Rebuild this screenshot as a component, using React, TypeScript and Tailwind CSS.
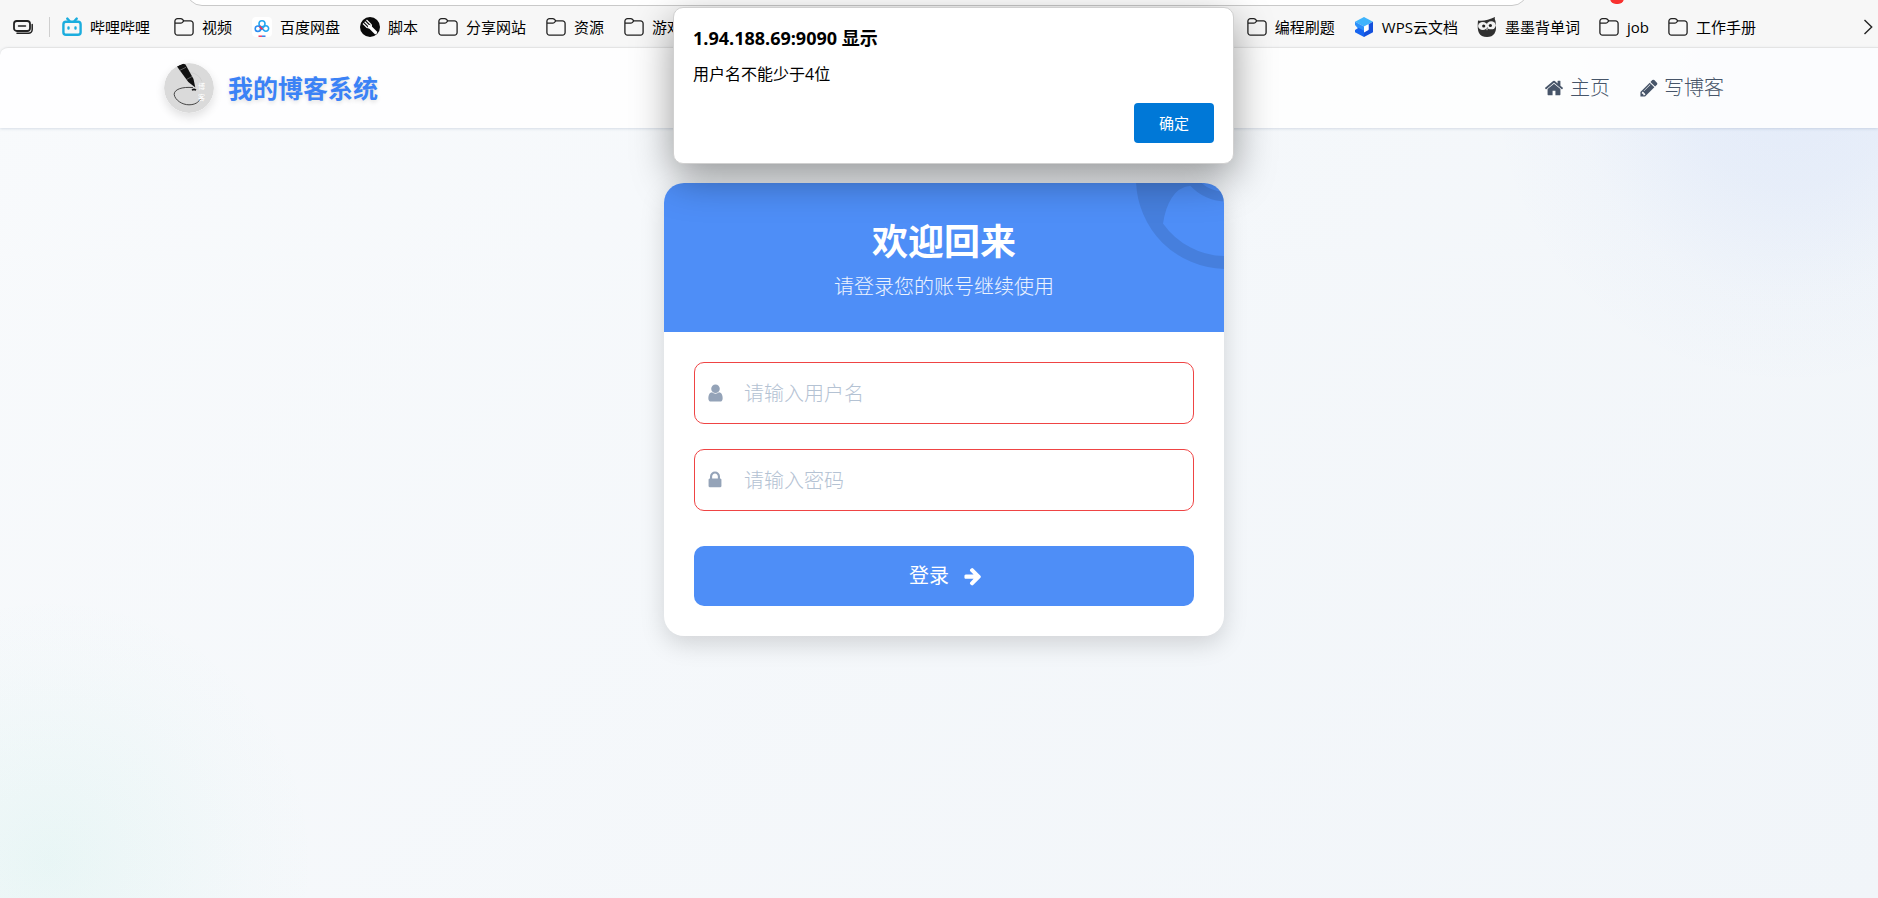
import React from 'react';

const FolderIcon = () => (
  <svg className="h-5 w-5 shrink-0" viewBox="0 0 20 20" fill="none" stroke="#222" strokeWidth="1.3">
    <path d="M.9 5V4.2A2.6 2.6 0 0 1 3.5 1.6h3.3c.6 0 1.1.2 1.5.6l1.6 1.7h6.6A2.6 2.6 0 0 1 19.1 6.5v9a2.6 2.6 0 0 1-2.6 2.6h-13A2.6 2.6 0 0 1 .9 15.5zM.9 6.2h5.9c.6 0 1-.2 1.4-.6l1.7-1.7" />
  </svg>
);

const BilibiliIcon = () => (
  <svg className="h-5 w-5 shrink-0" viewBox="0 0 20 20" fill="none" stroke="#1badde" strokeWidth="2.4" strokeLinecap="round">
    <rect x="1.4" y="4.8" width="17.2" height="13" rx="2.6" />
    <path d="M5.3 1.6 7.5 4M14.7 1.6 12.5 4M6.5 10.4v1.2M13.5 10.4v1.2" />
  </svg>
);

const NetdiskIcon = () => (
  <svg className="h-5 w-5 shrink-0" viewBox="0 0 20 20" fill="none">
    <rect width="20" height="20" rx="4" fill="#fff" />
    <circle cx="10" cy="6.8" r="3" stroke="#22a7f2" strokeWidth="1.6" />
    <path d="M8 9 12 13.4a2.7 2.7 0 1 0 0-3.8L8 13.4" stroke="#22a7f2" strokeWidth="1.6" />
    <circle cx="5.9" cy="11.7" r="2.7" stroke="#2b8cf0" strokeWidth="1.6" />
    <path d="M7.6 9.4 10.5 12.4" stroke="#f0325a" strokeWidth="1.8" />
    <path d="M6.5 19.2h3.5" stroke="#f0325a" strokeWidth="1.4" />
    <path d="M10 19.2h3.5" stroke="#2478e8" strokeWidth="1.4" />
  </svg>
);

const ScriptIcon = () => (
  <svg className="h-5 w-5 shrink-0" viewBox="0 0 20 20">
    <circle cx="10" cy="10" r="10" fill="#0a0a0a" />
    <path d="M9.5 9.5 15.5 15.5" stroke="#fff" strokeWidth="3.2" strokeLinecap="round" />
    <path d="M3 6.5 7 10.5Q9.5 11.5 10.8 9.8T10.5 7L6.5 3M4.7 4.8 9 9" fill="none" stroke="#fff" strokeWidth="1.2" />
  </svg>
);

const WpsIcon = () => (
  <svg className="h-5 w-5 shrink-0" viewBox="0 0 20 20">
    <path d="M10 0 19 4.8 10 9.5 1 4.8z" fill="#3fb4fc" />
    <path d="M19 4.8v10.4l-9 4.8v-4.5l4.5-2.5V7.2z" fill="#1450dc" />
    <path d="M1 4.8 10 9.5v5L4 11.4 1 8z" fill="#2b90fa" />
    <path d="M4.5 10.8 1 13v2.2l9 4.8v-6.3z" fill="#1765f0" />
    <path d="M10 9.8 14.5 7.4v5.2L10 15z" fill="#fff" />
  </svg>
);

const OwlIcon = () => (
  <svg className="h-5 w-5 shrink-0" viewBox="0 0 20 20">
    <path d="M1 3.5Q9 4.5 18 0q-.8 2 .5 4 1.500 9-1 12.500T10 20Q4 20 2 16T1 3.500z" fill="#303030" />
    <ellipse cx="5.8" cy="9" rx="4.7" ry="4" fill="#f2f2f2" />
    <ellipse cx="14.2" cy="8.3" rx="4.6" ry="4" fill="#f2f2f2" />
    <circle cx="6.7" cy="9" r="1.6" fill="#222" />
    <circle cx="13.4" cy="8.5" r="1.6" fill="#222" />
    <path d="M9 11.5h2l-1 2z" fill="#f2f2f2" />
  </svg>
);

interface Bookmark {
  label: string;
  icon: React.FC;
}

const LEFT_BOOKMARKS: Bookmark[] = [
  { label: '视频', icon: FolderIcon },
  { label: '百度网盘', icon: NetdiskIcon },
  { label: '脚本', icon: ScriptIcon },
  { label: '分享网站', icon: FolderIcon },
  { label: '资源', icon: FolderIcon },
  { label: '游戏', icon: FolderIcon },
];

const RIGHT_BOOKMARKS: Bookmark[] = [
  { label: '编程刷题', icon: FolderIcon },
  { label: 'WPS云文档', icon: WpsIcon },
  { label: '墨墨背单词', icon: OwlIcon },
  { label: 'job', icon: FolderIcon },
  { label: '工作手册', icon: FolderIcon },
];

const BookmarkLink: React.FC<Bookmark> = ({ label, icon: Icon }) => (
  <a href="#" className="flex items-center gap-2 whitespace-nowrap">
    <Icon />
    {label}
  </a>
);

const BrowserBar = () => (
  <div className="bg-[#f7f7f7] text-[15px] leading-5 text-black">
    <div className="flex h-[6px] items-end overflow-hidden pl-[186px]">
      <div className="h-10 flex-1 rounded-[16px] border border-[#c9c9c9] bg-white" />
      <div className="ml-[82px] mr-[254px] h-4 w-3.5 -translate-y-0.5 rounded-md bg-[#f8312f]" />
    </div>
    <nav className="flex h-[41px] items-center pl-[13px] pr-1">
      <button aria-label="标签页" className="mr-4">
        <svg className="h-5 w-5" viewBox="0 0 20 20" fill="none" stroke="#222" strokeWidth="1.5" strokeLinecap="round">
          <rect x="1" y="4" width="16" height="10" rx="2.8" strokeWidth="1.8" />
          <path d="M5.5 9h7M4 16.3h11.5a3.7 3.7 0 0 0 3.7-3.7V7.5" />
        </svg>
      </button>
      <span className="mr-3 h-5 w-px bg-[#cfcfcf]" />
      <div className="mr-6">
        <BookmarkLink label="哔哩哔哩" icon={BilibiliIcon} />
      </div>
      <div className="flex gap-5">
        {LEFT_BOOKMARKS.map((b) => (
          <BookmarkLink key={b.label} {...b} />
        ))}
      </div>
      <div className="ml-auto mr-[106px] flex gap-[19px]">
        {RIGHT_BOOKMARKS.map((b) => (
          <BookmarkLink key={b.label} {...b} />
        ))}
      </div>
      <button aria-label="更多书签">
        <svg className="h-4 w-3" viewBox="0 0 12 16" fill="none" stroke="#222" strokeWidth="1.4">
          <path d="M2.5 1 9.7 8l-7.200 7" />
        </svg>
      </button>
    </nav>
  </div>
);

const Logo = () => (
  <svg className="h-[50px] w-[50px] rounded-full shadow-[0_4px_10px_rgba(0,0,0,0.12)]" viewBox="0 0 50 50">
    <circle cx="25" cy="25" r="25" fill="#dadada" />
    <path d="M29 24.6C18 23.5 10 26.5 10.2 31.5 11 37 18 41.8 25 41.8c6 0 9.500-2.500 11.500-6" fill="none" stroke="#333" strokeWidth=".9" />
    <path d="M26 9.5q9 1 12 9" fill="none" stroke="#cacaca" strokeWidth=".7" />
    <path d="M13 3.5 19 .5l2.500 1 8 14.500 1.800 8.500-7-5.500z" fill="#111" />
    <path d="m15.500 7.500 6.500-3.200M22.500 16.500l5.500-3" stroke="#999" strokeWidth=".6" />
    <path d="M28 27.2q2-1.700 4 0" stroke="#111" strokeWidth="1.5" fill="none" />
    <text x="34" y="26" fontSize="7" fill="#fff">博</text>
    <text x="34" y="37" fontSize="7" fill="#fff">客</text>
  </svg>
);

interface GlyphProps {
  d: string;
  viewBox?: string;
  className?: string;
}

const Glyph: React.FC<GlyphProps> = ({ d, viewBox = '0 0 1792 1792', className = '' }) => (
  <svg viewBox={viewBox} fill="currentColor" aria-hidden="true" className={className}>
    <path d={d} />
  </svg>
);

const HOME =
  'M1472 992v480q0 26-19 45t-45 19h-384v-384h-256v384h-384q-26 0-45-19t-19-45v-480q0-1 .5-3t.5-3l575-474 575 474q1 2 1 6zm223-69l-62 74q-8 9-21 11h-3q-13 0-21-7l-692-577-692 577q-12 8-24 7-13-2-21-11l-62-74q-8-10-7-23.5t11-21.5l719-599q32-26 76-26t76 26l244 204v-195q0-14 9-23t23-9h192q14 0 23 9t9 23v408l219 182q10 8 11 21.5t-7 23.5z';
const PENCIL =
  'M491 1536l91-91-235-235-91 91v107h128v128h107zm523-928q0-22-22-22-10 0-17 7l-542 542q-7 7-7 17 0 22 22 22 10 0 17-7l542-542q7-7 7-17zm-54-192l416 416-832 832h-416v-416zm683 96q0 53-37 90l-166 166-416-416 166-165q36-38 90-38 53 0 91 38l235 234q37 39 37 91z';
const USER =
  'M1536 1399q0 109-62.5 187t-150.5 78h-854q-88 0-150.5-78t-62.5-187q0-85 8.5-160.5t31.5-152 58.5-131 94-89 134.5-34.5q131 128 313 128t313-128q76 0 134.5 34.5t94 89 58.5 131 31.5 152 8.5 160.5zm-256-887q0 159-112.5 271.5t-271.5 112.5-271.5-112.5-112.5-271.5 112.5-271.5 271.5-112.5 271.5 112.5 112.5 271.5z';
const LOCK =
  'M640 768h512v-192q0-106-75-181t-181-75-181 75-75 181v192zm832 96v576q0 40-28 68t-68 28h-960q-40 0-68-28t-28-68v-576q0-40 28-68t68-28h32v-192q0-184 132-316t316-132 316 132 132 316v192h32q40 0 68 28t28 68z';
const ARROW_RIGHT =
  'M1600 960q0 54-37 91l-651 651q-39 37-91 37-51 0-90-37l-75-75q-38-38-38-91t38-91l293-293h-704q-52 0-84.5-37.5t-32.5-90.5v-128q0-53 32.5-90.5t84.5-37.5h704l-293-294q-38-36-38-90t38-90l75-75q38-38 90-38 53 0 91 38l651 651q37 35 37 90z';
const USER_CIRCLE =
  'M1523 1339q-22-155-87.5-257.5t-184.5-118.5q-67 74-159.5 115.5t-195.5 41.5-195.5-41.5-159.5-115.5q-119 16-184.5 118.5t-87.5 257.5q106 150 271 237.5t356 87.5 356-87.5 271-237.5zm-243-699q0-159-112.5-271.5t-271.5-112.5-271.5 112.5-112.5 271.5 112.5 271.5 271.5 112.5 271.5-112.5 112.5-271.5zm512 256q0 182-71 347.5t-190.5 286-285.5 191.5-349 71q-182 0-348-71t-286-191-191-286-71-348 71-348 191-286 286-191 348-71 348 71 286 191 191 286 71 348z';

const SiteHeader = () => (
  <header className="rounded-tl-lg border-t border-[#e4e4e4] bg-white/85 pl-[10px] shadow-[0_1px_3px_rgba(30,60,110,0.15)]">
    <div className="mx-auto flex h-20 max-w-[1560px] items-center justify-between">
      <div className="flex items-center gap-3.5">
        <Logo />
        <span className="text-[25px] font-bold leading-8 text-[#3b82f6] [text-shadow:0_2px_4px_rgba(0,0,0,0.12)]">
          我的博客系统
        </span>
      </div>
      <nav className="flex gap-[30px] text-xl font-light text-[#475569]">
        <a href="#" className="flex items-center gap-1.5">
          <Glyph d={HOME} className="h-5 w-5" />
          主页
        </a>
        <a href="#" className="flex items-center gap-1.5">
          <Glyph d={PENCIL} viewBox="128 0 1536 1792" className="h-5 w-[18px]" />
          写博客
        </a>
      </nav>
    </div>
  </header>
);

const AlertDialog = () => (
  <div
    role="alertdialog"
    aria-labelledby="alert-title"
    aria-describedby="alert-message"
    className="absolute left-1/2 top-[7px] z-10 ml-[-266px] w-[561px] rounded-[10px] border border-[#d0d0d0] bg-white px-[19px] pb-5 pt-[18px] text-black shadow-[0_14px_40px_rgba(0,0,0,0.4)]"
  >
    <h2 id="alert-title" className="text-lg font-bold leading-6">
      1.94.188.69:9090 显示
    </h2>
    <p id="alert-message" className="mt-3 text-base leading-6">
      用户名不能少于4位
    </p>
    <div className="mt-[17px] flex justify-end">
      <button className="h-10 w-20 rounded bg-[#0078d7] text-[15px] text-white">确定</button>
    </div>
  </div>
);

interface FieldProps {
  id: string;
  type: string;
  label: string;
  icon: React.ReactNode;
}

const Field: React.FC<FieldProps> = ({ id, type, label, icon }) => (
  <div className="flex h-[62px] items-center rounded-[10px] border border-[#ef4444] bg-white pl-[13px]">
    <label htmlFor={id} aria-label={label} className="w-9 text-[#94a3b8]">
      {icon}
    </label>
    <input
      id={id}
      type={type}
      placeholder={label}
      className="h-full min-w-0 flex-1 rounded-[10px] text-xl font-light text-[#334155] outline-none placeholder:text-[#b4c2d3]"
    />
  </div>
);

const LoginCard = () => (
  <section className="w-[560px] overflow-hidden rounded-[20px] bg-white shadow-[0_8px_24px_rgba(0,0,0,0.15)]">
    <div className="relative overflow-hidden bg-[#4e8ef7] pb-[30px] pt-[35px] text-center text-white">
      <Glyph d={USER_CIRCLE} className="absolute -right-[92px] -top-[94px] h-[180px] w-[180px] text-black/10" />
      <h1 className="text-4xl font-bold leading-[48px]">欢迎回来</h1>
      <p className="mt-1.5 text-xl font-light leading-[30px] text-white/90">请登录您的账号继续使用</p>
    </div>
    <form className="p-[30px]" onSubmit={(e) => e.preventDefault()}>
      <div className="flex flex-col gap-[25px]">
        <Field
          id="username"
          type="text"
          label="请输入用户名"
          icon={<Glyph d={USER} viewBox="256 0 1280 1792" className="h-5 w-[15px]" />}
        />
        <Field
          id="password"
          type="password"
          label="请输入密码"
          icon={<Glyph d={LOCK} viewBox="320 0 1152 1792" className="h-5 w-3.5" />}
        />
      </div>
      <button
        type="submit"
        className="mt-[35px] flex h-[60px] w-full items-center justify-center gap-3.5 rounded-[10px] bg-[#4e8ef7] pl-1 text-xl text-white"
      >
        登录
        <Glyph d={ARROW_RIGHT} className="h-5 w-5" />
      </button>
    </form>
  </section>
);

const App = () => {
  return (
    <div className='relative flex min-h-screen flex-col overflow-hidden bg-[#f7f7f7] font-["Open_Sans","Noto_Sans_CJK_SC",sans-serif]'>
      <BrowserBar />
      <div className="flex flex-1 flex-col rounded-tl-lg bg-[radial-gradient(circle_at_1790px_40px,rgba(67,120,238,0.09),rgba(67,120,238,0.07)_100px,rgba(67,120,238,0.02)_210px,transparent_300px),radial-gradient(circle_at_50px_815px,rgba(60,210,170,0.07),rgba(60,210,170,0.045)_90px,rgba(60,210,170,0.01)_200px,transparent_270px),linear-gradient(135deg,#f8fafc,#f1f5f9)]">
        <SiteHeader />
        <main className="flex flex-1 justify-center pl-[10px]">
          <div className="pb-14 pt-[55px]">
            <LoginCard />
          </div>
        </main>
      </div>
      <AlertDialog />
    </div>
  );
};

export default App;
